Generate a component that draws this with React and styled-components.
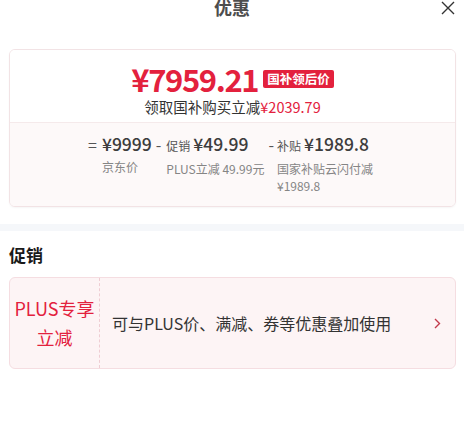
import styled, { createGlobalStyle } from "styled-components";

const colors = {
  red: "#e3213d",
  text: "#333333",
  title: "#1a1a1a",
  gray: "#858585",
  border: "#f2e3e5",
};

const GlobalStyle = createGlobalStyle`
  body {
    margin: 0;
    background: #ffffff;
    font-family: "Noto Sans CJK SC", "Noto Sans", sans-serif;
    color: ${colors.text};
  }
`;

const Header = styled.div`
  display: grid;
  grid-template-columns: 1fr auto 1fr;
  align-items: center;
  height: 16px;
  padding: 0 9px;
`;

const HeaderTitle = styled.h1`
  grid-column: 2;
  margin: -3px 0 0;
  font-size: 18px;
  line-height: 16px;
  font-weight: 700;
  color: #4d4d4d;
`;

const CloseButton = styled.button`
  justify-self: end;
  border: 0;
  background: none;
  padding: 0;
  display: flex;
  cursor: pointer;
`;

const PriceCard = styled.div`
  margin: 33px 8px 0 9px;
  border: 1px solid ${colors.border};
  border-radius: 6px;
  overflow: hidden;
  box-shadow: 0 1px 2px rgba(0, 0, 0, 0.04);
`;

const PriceTop = styled.div`
  display: flex;
  flex-direction: column;
  align-items: center;
  padding: 10px 0 5px;
  background: #ffffff;
  border-bottom: 1px solid #f5eaeb;
`;

const FinalRow = styled.div`
  display: flex;
  align-items: center;
  gap: 5px;
`;

const FinalPrice = styled.span`
  font-size: 31px;
  line-height: 37px;
  font-weight: 600;
  letter-spacing: -1.4px;
  color: ${colors.red};
`;

const Badge = styled.span`
  background: ${colors.red};
  color: #ffffff;
  font-size: 12.5px;
  font-weight: 700;
  line-height: 18px;
  padding: 0 4px;
  border-radius: 2px;
`;

const SubLine = styled.div`
  font-size: 14.5px;
  line-height: 20px;
  color: ${colors.text};
`;

const Red = styled.span`
  color: ${colors.red};
`;

const PriceBottom = styled.div`
  display: flex;
  justify-content: center;
  align-items: flex-start;
  gap: 4px;
  padding: 10px 0 12px;
  background: #fdf9f9;
`;

const Term = styled.div`
  display: grid;
  grid-template-columns: auto auto;
  column-gap: ${({ $gap }) => $gap}px;
  row-gap: 3px;
  align-items: start;
  align-content: start;
`;

const Operator = styled.span`
  font-size: 16px;
  line-height: 22px;
  color: #555555;
`;

const TermValue = styled.div`
  display: flex;
  align-items: baseline;
  gap: 3px;
  line-height: 22px;
`;

const TermTag = styled.span`
  font-size: 12px;
  color: #555555;
`;

const TermPrice = styled.span`
  font-size: 17.5px;
  font-weight: 500;
  color: #3d3d3d;
`;

const TermNote = styled.div`
  grid-column: 2;
  font-size: 12px;
  line-height: 17px;
  color: ${colors.gray};
  max-width: ${({ $max }) => $max || "none"};
`;

const Divider = styled.div`
  height: 7px;
  margin-top: 17px;
  background: #f5f7fa;
`;

const SectionTitle = styled.h2`
  margin: 12px 0 0 9px;
  font-size: 17px;
  line-height: 24px;
  font-weight: 700;
  color: ${colors.title};
`;

const PromoCard = styled.div`
  display: flex;
  align-items: stretch;
  margin: 10px 8px 0 9px;
  height: 90px;
  border: 1px solid #f5dde1;
  border-radius: 6px;
  background: #fdf4f5;
`;

const PromoLabel = styled.div`
  width: 89px;
  flex-shrink: 0;
  display: flex;
  align-items: center;
  justify-content: center;
  text-align: center;
  font-size: 18px;
  line-height: 29px;
  color: ${colors.red};
  border-right: 1px dashed #efcdd3;
`;

const PromoText = styled.div`
  flex: 1;
  display: flex;
  align-items: center;
  padding-left: 12px;
  font-size: 16px;
  color: ${colors.text};
`;

const Chevron = styled.div`
  display: flex;
  align-items: center;
  padding-right: 14px;
`;

const terms = [
  { op: "=", gap: 5, price: "¥9999", note: "京东价" },
  { op: "-", gap: 5, tag: "促销", price: "¥49.99", note: "PLUS立减 49.99元" },
  {
    op: "-",
    gap: 3,
    tag: "补贴",
    price: "¥1989.8",
    note: "国家补贴云闪付减¥1989.8",
    max: "100px",
  },
];

function App() {
  return (
    <>
      <GlobalStyle />
      <Header>
        <HeaderTitle>优惠</HeaderTitle>
        <CloseButton aria-label="关闭">
          <svg width="14" height="14" viewBox="0 0 14 14">
            <path
              d="M1 1 L13 13 M13 1 L1 13"
              stroke="#333"
              strokeWidth="1.4"
              fill="none"
            />
          </svg>
        </CloseButton>
      </Header>

      <PriceCard>
        <PriceTop>
          <FinalRow>
            <FinalPrice>¥7959.21</FinalPrice>
            <Badge>国补领后价</Badge>
          </FinalRow>
          <SubLine>
            领取国补购买立减<Red>¥2039.79</Red>
          </SubLine>
        </PriceTop>
        <PriceBottom>
          {terms.map((t) => (
            <Term key={t.price} $gap={t.gap}>
              <Operator>{t.op}</Operator>
              <TermValue>
                {t.tag && <TermTag>{t.tag}</TermTag>}
                <TermPrice>{t.price}</TermPrice>
              </TermValue>
              <TermNote $max={t.max}>{t.note}</TermNote>
            </Term>
          ))}
        </PriceBottom>
      </PriceCard>

      <Divider />

      <SectionTitle>促销</SectionTitle>
      <PromoCard>
        <PromoLabel>
          PLUS专享
          <br />
          立减
        </PromoLabel>
        <PromoText>可与PLUS价、满减、券等优惠叠加使用</PromoText>
        <Chevron>
          <svg width="7" height="11" viewBox="0 0 7 11">
            <path
              d="M1 1 L5.5 5.5 L1 10"
              stroke="#c23a4c"
              strokeWidth="1.4"
              fill="none"
            />
          </svg>
        </Chevron>
      </PromoCard>
    </>
  );
}

export default App;
